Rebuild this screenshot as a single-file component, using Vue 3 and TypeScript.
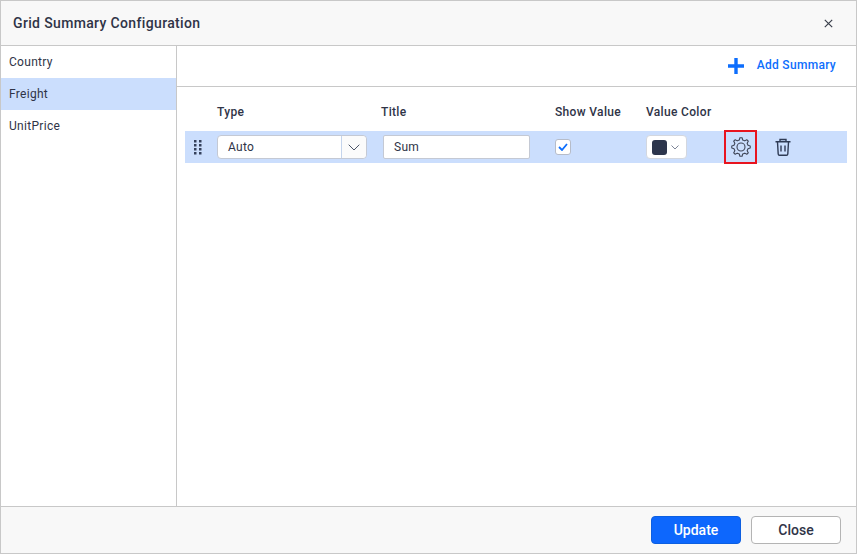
<script setup lang="ts">
const fields: string[] = ['Country', 'Freight', 'UnitPrice']
const selected = 'Freight'
const dots: number[][] = []
for (let r = 0; r < 4; r++) for (let c = 0; c < 2; c++) dots.push([c * 5, r * 4])

function gearPath(): string {
  const pts: string[] = []
  const teeth = 8
  const cx = 10
  const cy = 10
  for (let i = 0; i < teeth; i++) {
    const a = (i * 2 * Math.PI) / teeth - Math.PI / 2
    const step = (2 * Math.PI) / teeth
    const seq: [number, number][] = [
      [7.2, a - step * 0.3],
      [9.3, a - step * 0.15],
      [9.3, a + step * 0.15],
      [7.2, a + step * 0.3],
    ]
    for (const [r, t] of seq) pts.push(`${(cx + r * Math.cos(t)).toFixed(2)} ${(cy + r * Math.sin(t)).toFixed(2)}`)
  }
  return 'M' + pts.join('L') + 'Z'
}
const gear = gearPath()
</script>

<template>
  <div class="dialog">
    <header class="head">
      <span class="title">Grid Summary Configuration</span>
      <svg class="x" width="9" height="9" viewBox="0 0 9 9"><path d="M.8.8l7.4 7.4M8.2.8L.8 8.2" stroke="#3a3f4b" stroke-width="1.2" fill="none"/></svg>
    </header>
    <div class="body">
      <aside class="side">
        <div v-for="f in fields" :key="f" class="item" :class="{ on: f === selected }">{{ f }}</div>
      </aside>
      <main class="main">
        <div class="toolbar">
          <svg width="16" height="16" viewBox="0 0 16 16"><path d="M6.3 0h3.4v6.300H16v3.400H9.700V16H6.300V9.700H0V6.300h6.300z" fill="#0d6efd"/></svg>
          <span class="add">Add Summary</span>
        </div>
        <div class="cols">
          <span class="c-type">Type</span>
          <span class="c-title">Title</span>
          <span class="c-show">Show Value</span>
          <span class="c-color">Value Color</span>
        </div>
        <div class="row">
          <svg class="drag" width="8" height="15" viewBox="0 0 8 15">
            <rect v-for="(d, i) in dots" :key="i" :x="d[0]" :y="d[1]" width="2.500" height="2.500" fill="#34405c"/>
          </svg>
          <div class="select">
            <span class="val">Auto</span>
            <span class="arrow">
              <svg width="12" height="7" viewBox="0 0 12 7"><path d="M.7.7L6 6l5.300-5.300" stroke="#4b5468" stroke-width="1" fill="none"/></svg>
            </span>
          </div>
          <div class="input"><span class="val">Sum</span></div>
          <div class="check">
            <svg width="10" height="8" viewBox="0 0 10 8"><path d="M1 4l3 3 5-6" stroke="#0d6efd" stroke-width="1.8" fill="none"/></svg>
          </div>
          <div class="color">
            <span class="swatch"></span>
            <svg width="8" height="5" viewBox="0 0 8 5"><path d="M.5.5L4 4 7.500.5" stroke="#7d8597" stroke-width="1" fill="none"/></svg>
          </div>
          <div class="gear">
            <svg width="20" height="20" viewBox="0 0 20 20" fill="none" stroke="#3f4658" stroke-width="1.1" stroke-linejoin="round">
              <path :d="gear"/>
              <circle cx="10" cy="10" r="4"/>
            </svg>
          </div>
          <svg class="trash" width="16" height="18" viewBox="0 0 16 18" fill="none" stroke="#2f3b55" stroke-width="1.4">
            <path d="M.5 3.700h15M5 3.500V1.500h6v2M2.500 4l.7 12a1.300 1.300 0 0 0 1.300 1.200h7a1.300 1.300 0 0 0 1.300-1.200l.7-12M6 7.500v6M10 7.500v6"/>
          </svg>
        </div>
      </main>
    </div>
    <footer class="foot">
      <button class="btn primary">Update</button>
      <button class="btn">Close</button>
    </footer>
  </div>
</template>

<style>
html, body { margin: 0; background: #fff; }
</style>

<style scoped>
.dialog { box-sizing: border-box; width: 857px; height: 554px; border: 1px solid #c8c8c8; display: flex; flex-direction: column; font-family: Roboto, "Liberation Sans", sans-serif; color: #2f3447; font-size: 12px; background: #fff; }
.head { flex: 0 0 44px; box-sizing: content-box; background: #f8f8f8; border-bottom: 1px solid #c8c8c8; display: flex; align-items: center; justify-content: space-between; padding: 0 23px 0 12px; }
.title { font-size: 14px; font-weight: 500; color: #2f3447; letter-spacing: .35px; }
.x { display: block; margin-top: 1px; }
.body { flex: 1; display: flex; min-height: 0; }
.side { width: 175px; border-right: 1px solid #c8c8c8; }
.item { height: 32px; line-height: 32px; padding-left: 8px; font-size: 12px; letter-spacing: .3px; }
.item.on { background: #cbdefd; }
.main { flex: 1; min-width: 0; }
.toolbar { height: 40px; border-bottom: 1px solid #c8c8c8; display: flex; align-items: center; justify-content: flex-end; padding-right: 20px; box-sizing: content-box; }
.add { margin-left: 13px; color: #0d6efd; font-weight: 500; font-size: 12px; letter-spacing: .3px; margin-top: -3px; }
.cols { height: 44px; display: flex; align-items: center; font-weight: 500; font-size: 12px; padding-left: 40px; box-sizing: border-box; letter-spacing: .33px; padding-top: 5px; }
.c-type { width: 164px; }
.c-title { width: 174px; }
.c-show { width: 91px; }
.row { margin-left: 8px; width: 662px; height: 32px; background: #cbdefd; display: flex; align-items: center; }
.drag { margin-left: 9px; flex: none; margin-top: 1px; }
.select { margin-left: 15px; width: 150px; height: 24px; box-sizing: border-box; background: #fff; border: 1px solid #c4c9d4; border-radius: 4px; display: flex; align-items: center; flex: none; }
.val { padding-left: 10px; font-size: 12px; letter-spacing: .3px; flex: 1; margin-top: -1px; }
.arrow { width: 24px; height: 100%; border-left: 1px solid #c4d4ec; display: flex; align-items: center; justify-content: center; background: #fbfbfb; border-radius: 0 4px 4px 0; }
.input { margin-left: 16px; width: 147px; height: 24px; box-sizing: border-box; background: #fff; border: 1px solid #c4c9d4; border-radius: 2px; display: flex; align-items: center; flex: none; }
.check { margin-left: 25px; width: 16px; height: 16px; box-sizing: border-box; background: #fff; border: 1px solid #b6bcc9; border-radius: 3px; display: flex; align-items: center; justify-content: center; flex: none; margin-top: -1px; }
.color { margin-left: 75px; width: 41px; height: 24px; box-sizing: border-box; background: #fff; border: 1px solid #d3d7df; border-radius: 4px; display: flex; align-items: center; gap: 4px; padding-left: 5px; flex: none; }
.swatch { width: 15px; height: 15px; background: #2c354c; border-radius: 3px; flex: none; }
.gear { margin-left: 37px; width: 33px; height: 34px; box-sizing: border-box; border: 2px solid #e8141f; display: flex; align-items: center; justify-content: center; flex: none; }
.trash { margin-left: 18px; flex: none; }
.foot { flex: 0 0 46px; box-sizing: content-box; background: #f8f8f8; border-top: 1px solid #c8c8c8; display: flex; align-items: center; justify-content: flex-end; gap: 10px; padding-right: 15px; }
.btn { width: 90px; height: 28px; box-sizing: border-box; border: 1px solid #b4b4b4; background: #fff; border-radius: 4px; font-family: inherit; font-size: 14px; font-weight: 500; color: #2f3447; padding: 0; }
.primary { background: #0d67fd; border-color: #0d5fe0; color: #fff; }
</style>
